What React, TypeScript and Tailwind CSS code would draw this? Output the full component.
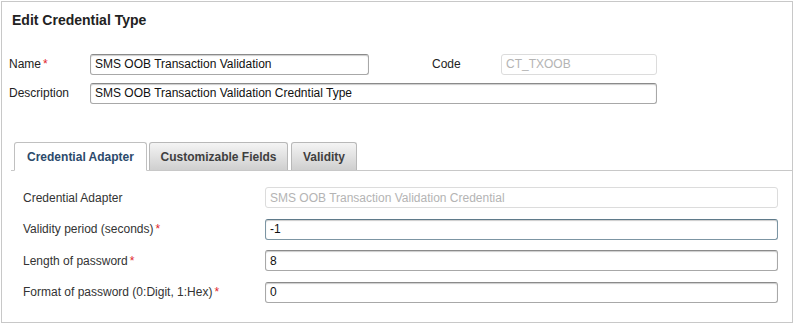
import React from 'react';

const font = { fontFamily: '"Liberation Sans", Arial, sans-serif' };

const Req = () => <span className="text-[#e0242b] ml-[2px]">*</span>;

const Field = ({ value, className, disabled, focused }: { value: string; className: string; disabled?: boolean; focused?: boolean }) => (
  <div
    className={
      'flex items-center h-[21px] px-[4px] rounded-[3px] border text-[12px] ' +
      (disabled
        ? 'border-[#dcdcdc] text-[#b4b4b4] bg-white '
        : focused
        ? 'border-[#7c95a3] border-t-[#5f7a8a] text-[#111] bg-white shadow-[inset_0_1px_1px_rgba(0,0,0,0.2)] '
        : 'border-[#a8a8a8] border-t-[#8a8a8a] text-[#111] bg-white shadow-[inset_0_1px_1px_rgba(0,0,0,0.2)] ') +
      className
    }
  >
    {value}
  </div>
);

const App = () => {
  return (
    <div className="bg-white w-[795px] h-[323px]" style={font}>
      <div className="ml-px mt-px w-[792px] h-[322px] border border-[#c8c8c8] text-[#222]">
        <div className="pl-[10px] pt-[8px] h-[40px] text-[14px] font-bold text-[#222]">Edit Credential Type</div>

        <div className="flex items-center mt-[11px] h-[22px]">
          <div className="w-[88px] pl-[7px] text-[12px]">Name<Req /></div>
          <Field value="SMS OOB Transaction Validation" className="w-[279px]" />
          <div className="w-[132px] pl-[63px] text-[12px]">Code</div>
          <Field value="CT_TXOOB" className="w-[156px]" disabled />
        </div>
        <div className="flex items-center mt-[7px] h-[22px]">
          <div className="w-[88px] pl-[7px] text-[12px]">Description</div>
          <Field value="SMS OOB Transaction Validation Credntial Type" className="w-[567px]" />
        </div>

        <div className="mt-[39px] ml-[9px] flex items-end h-[28px] border-b border-[#c8c8c8]">
          <div className="ml-[3px] h-[29px] -mb-px w-[133px] flex items-center justify-center bg-white border border-[#c0c0c0] border-b-white rounded-t-[3px] text-[12px] font-bold text-[#2c4a6b]">
            Credential Adapter
          </div>
          <div className="ml-[2px] h-[28px] w-[139px] flex items-center justify-center bg-gradient-to-b from-[#f4f4f4] to-[#cfcfcf] border border-[#b8b8b8] border-b-0 rounded-t-[3px] text-[12px] font-bold text-[#3f3f3f]">
            Customizable Fields
          </div>
          <div className="ml-[3px] h-[28px] w-[66px] flex items-center justify-center bg-gradient-to-b from-[#f4f4f4] to-[#cfcfcf] border border-[#b8b8b8] border-b-0 rounded-t-[3px] text-[12px] font-bold text-[#3f3f3f]">
            Validity
          </div>
        </div>

        <div className="pl-[21px] pt-[16px] flex flex-col gap-[10.5px] text-[12px] text-[#333]">
          <div className="flex items-center h-[21px]">
            <div className="w-[242px]">Credential Adapter</div>
            <Field value="SMS OOB Transaction Validation Credential" className="w-[513px]" disabled />
          </div>
          <div className="flex items-center h-[21px]">
            <div className="w-[242px]">Validity period (seconds)<Req /></div>
            <Field value="-1" className="w-[513px]" focused />
          </div>
          <div className="flex items-center h-[21px]">
            <div className="w-[242px]">Length of password<Req /></div>
            <Field value="8" className="w-[513px]" />
          </div>
          <div className="flex items-center h-[21px]">
            <div className="w-[242px]">Format of password (0:Digit, 1:Hex)<Req /></div>
            <Field value="0" className="w-[513px]" />
          </div>
        </div>
      </div>
    </div>
  );
};

export default App;
